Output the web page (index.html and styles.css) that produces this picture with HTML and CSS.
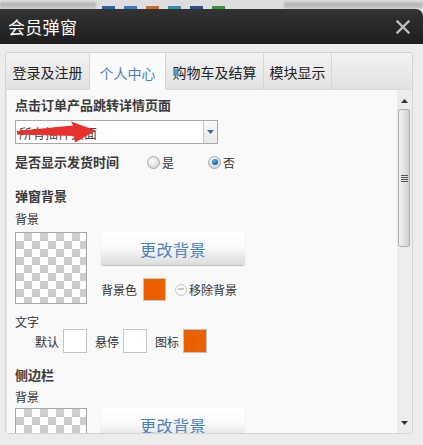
FILE: index.html
```html
<!DOCTYPE html>
<html>
<head>
<meta charset="utf-8">
<link rel="stylesheet" href="styles.css">
</head>
<body>
<div class="page">
  <div class="behind">
    <span class="blurbar b1"></span>
    <span class="chip c1"></span><span class="chip c2"></span><span class="chip c3"></span><span class="chip c4"></span><span class="chip c5"></span><span class="chip c6"></span>
    <span class="blurbar b2"></span>
  </div>
  <div class="dialog">
    <div class="header">
      <span class="title">会员弹窗</span>
      <svg class="close" width="14" height="14" viewBox="0 0 14 14"><path d="M1.5 1.5 L12.5 12.5 M12.5 1.5 L1.5 12.5" stroke="#bdbdbd" stroke-width="2.4" stroke-linecap="square"/></svg>
    </div>
    <div class="body">
      <div class="tabbox">
        <div class="tabs">
          <div class="tab t1">登录及注册</div>
          <div class="tab t2 active">个人中心</div>
          <div class="tab t3">购物车及结算</div>
          <div class="tab t4">模块显示</div>
          <div class="tab rest"></div>
        </div>
        <div class="main">
          <div class="panel">
            <div class="label bold first">点击订单产品跳转详情页面</div>
            <div class="select">
              <span class="select-text">所有插件页面</span>
              <span class="select-btn"><svg width="7" height="4" viewBox="0 0 7 4"><path d="M0 0 H7 L3.5 4 Z" fill="#2e6fb5"/></svg></span>
              <svg class="arrow" width="84" height="24" viewBox="0 0 84 24"><path d="M0 10 L56 4.5 L54 0.5 L79 9.5 L58 21.5 L57 15 L0 13.5 Z" fill="#e8302c"/></svg>
            </div>
            <div class="row radios">
              <span class="label bold">是否显示发货时间</span>
              <span class="radio-item r1"><span class="radio"></span>是</span>
              <span class="radio-item r2"><span class="radio on"></span>否</span>
            </div>
            <div class="label bold sec">弹窗背景</div>
            <div class="label sub">背景</div>
            <div class="bgrow">
              <div class="checker"></div>
              <div class="bgctl">
                <div class="btn">更改背景</div>
                <div class="colorrow">
                  <span>背景色</span>
                  <span class="swatch orange"></span>
                  <span class="remove"><span class="minus"></span>移除背景</span>
                </div>
              </div>
            </div>
            <div class="label sub text-label">文字</div>
            <div class="textrow">
              <span>默认</span><span class="swatch white"></span>
              <span class="gap">悬停</span><span class="swatch white"></span>
              <span class="gap">图标</span><span class="swatch orange"></span>
            </div>
            <div class="label bold sec2">侧边栏</div>
            <div class="label sub sub2">背景</div>
            <div class="bgrow bgrow2">
              <div class="checker"></div>
              <div class="bgctl">
                <div class="btn">更改背景</div>
              </div>
            </div>
          </div>
          <div class="scrollbar">
            <div class="sarrow up"><svg width="7" height="4" viewBox="0 0 7 4"><path d="M0 4 H7 L3.5 0 Z" fill="#333"/></svg></div>
            <div class="thumb"><span class="grip"></span></div>
            <div class="track"></div>
            <div class="sarrow down"><svg width="7" height="4" viewBox="0 0 7 4"><path d="M0 0 H7 L3.5 4 Z" fill="#333"/></svg></div>
          </div>
        </div>
      </div>
    </div>
  </div>
</div>
</body>
</html>
```

FILE: styles.css
```css
* { box-sizing: border-box; }
html, body { margin: 0; padding: 0; }
body {
  width: 423px;
  height: 445px;
  overflow: hidden;
  font-family: "Noto Sans CJK SC", "Noto Sans", sans-serif;
  font-size: 12px;
  color: #333;
  background: #ececec;
}
.page { width: 423px; height: 445px; display: flex; flex-direction: column; }
.behind {
  height: 9px;
  background: #dedede;
  display: flex;
  align-items: flex-end;
  overflow: hidden;
}
.blurbar { height: 6px; background: #b9b9b9; filter: blur(1px); margin-bottom: 1px; }
.b1 { width: 104px; margin-right: 6px; }
.b2 { width: 150px; margin-left: 50px; }
.chip { width: 14px; height: 3px; margin-right: 9px; }
.c1 { background: #2d62a6; }
.c2 { background: #2f7bc0; }
.c3 { background: #c86b2b; }
.c4 { background: #2f8fa8; }
.c5 { background: #2d4f8f; }
.c6 { background: #3e8f3e; }

.dialog { flex: 1; display: flex; flex-direction: column; border-top-right-radius: 7px; overflow: hidden; }
.header {
  height: 35px;
  background: linear-gradient(#333333, #1e1e1e);
  display: flex;
  align-items: center;
  justify-content: space-between;
  padding: 0 13px 0 8px;
}
.title { color: #fff; font-size: 17px; letter-spacing: 0.3px; }
.close { display: block; margin-top: 1px; }

.body { flex: 1; background: #ececec; padding: 8px 10px 11px 5px; }
.tabbox {
  height: 382px;
  border: 1px solid #d4d4d4;
  border-radius: 3px;
  display: flex;
  flex-direction: column;
  background: #ececec;
}
.tabs {
  height: 37px;
  display: flex;
  background: linear-gradient(#f3f3f3, #e1e1e1);
  border-bottom: 1px solid #dadada;
  border-radius: 3px 3px 0 0;
}
.tab {
  font-size: 14px;
  color: #222;
  display: flex;
  align-items: center;
  justify-content: center;
  border-right: 1px solid #d6d6d6;
  padding-top: 1px;
}
.t1 { width: 84px; }
.t2 { width: 76px; }
.t3 { width: 98px; }
.t4 { width: 68px; }
.rest { flex: 1; border-right: none; }
.tab.active { background: #fafafa; color: #4a7fc1; height: 38px; }

.main { flex: 1; display: flex; min-height: 0; }
.panel {
  width: 391px;
  background: #f9f9f9;
  overflow: hidden;
  padding: 6px 0 0 8px;
  border-left: 1px solid #e6e6e6;
}
.label { line-height: 18px; color: #333; }
.bold { font-weight: bold; color: #3a3a3a; font-size: 13px; }
.first { margin-bottom: 6px; }
.select {
  position: relative;
  width: 203px;
  height: 24px;
  border: 1px solid #a9a9a9;
  background: #fff;
  display: flex;
  align-items: center;
}
.select-text { flex: 1; padding-left: 3px; color: #444; font-size: 13px; }
.select-btn {
  width: 14px;
  height: 22px;
  border-left: 1px solid #c8c8c8;
  background: linear-gradient(#fafafa, #e8e8e8);
  display: flex;
  align-items: center;
  justify-content: center;
}
.select-btn svg { display: block; }
.arrow { position: absolute; left: 1px; top: 0px; }

.radios { display: flex; align-items: center; margin-top: 9px; height: 18px; }
.radio-item { display: flex; align-items: center; gap: 2px; color: #333; }
.r1 { margin-left: 28px; }
.r2 { margin-left: 34px; }
.radio {
  width: 13px; height: 13px; border-radius: 50%;
  border: 1px solid #a8a8a8;
  background: radial-gradient(circle at 40% 35%, #ffffff, #d8d8d8 70%);
  display: inline-block;
  position: relative;
}
.radio.on::after {
  content: "";
  position: absolute;
  left: 2.5px; top: 2.5px;
  width: 6px; height: 6px; border-radius: 50%;
  background: radial-gradient(circle at 40% 35%, #5bb4f0, #0b5da8 75%);
}
.sec { margin-top: 16px; }
.sub { margin-top: 5px; }
.bgrow { display: flex; margin-top: 4px; }
.checker {
  width: 72px; height: 72px;
  border: 1px solid #a8a8a8;
  background-color: #fff;
  background-image:
    linear-gradient(45deg, #cdcdcd 25%, transparent 25%, transparent 75%, #cdcdcd 75%),
    linear-gradient(45deg, #cdcdcd 25%, transparent 25%, transparent 75%, #cdcdcd 75%);
  background-size: 16px 16px;
  background-position: 0 0, 8px 8px;
  flex: none;
}
.bgctl { margin-left: 14px; }
.btn {
  width: 144px; height: 33px;
  border-radius: 3px;
  background: linear-gradient(#ffffff 0%, #fafafa 45%, #dcdcdc 100%);
  box-shadow: 0 1px 1px rgba(0,0,0,0.25);
  color: #4a7fc1;
  font-size: 16px;
  display: flex; align-items: center; justify-content: center;
  letter-spacing: 0.5px;
}
.colorrow { display: flex; align-items: center; margin-top: 13px; height: 23px; }
.swatch { width: 24px; height: 24px; border: 1px solid #c4c4c4; display: inline-block; }
.colorrow .swatch { width: 23px; height: 23px; margin-left: 6px; }
.orange { background: #eb6100; }
.white { background: #fff; }
.remove { display: flex; align-items: center; margin-left: 9px; gap: 2px; }
.minus {
  width: 12px; height: 12px; border-radius: 50%;
  border: 1.5px solid #c8c8c8;
  position: relative;
  display: inline-block;
}
.minus::after {
  content: ""; position: absolute; left: 2px; right: 2px; top: 3.5px; height: 2px; background: #c8c8c8;
}
.text-label { margin-top: 9px; }
.textrow { display: flex; align-items: center; margin-left: 20px; margin-top: -2px; height: 24px; }
.textrow .swatch { margin-left: 4px; }
.textrow .gap { margin-left: 8px; }
.sec2 { margin-top: 13px; }
.sub2 { margin-top: 4px; }
.bgrow2 { margin-top: 2px; }

.scrollbar { width: 14px; background: #ececec; display: flex; flex-direction: column; }
.sarrow { height: 10px; display: flex; align-items: center; justify-content: center; }
.sarrow svg { display: block; }
.up { margin-top: 6px; }
.thumb {
  height: 138px;
  margin: 3px 1px 0 1px;
  border: 1px solid #b0b0b0;
  border-radius: 2px;
  background: linear-gradient(90deg, #f2f2f2, #dedede 60%, #cfcfcf);
  display: flex; align-items: center; justify-content: center;
}
.grip {
  width: 7px; height: 7px;
  background: repeating-linear-gradient(#555 0 1px, transparent 1px 2px);
}
.track { flex: 1; }
.down { margin-bottom: 5px; }
```
